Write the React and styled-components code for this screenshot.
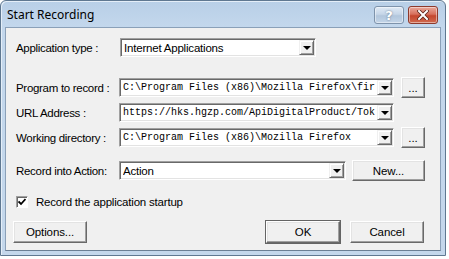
import styled, { createGlobalStyle } from "styled-components"

const Global = createGlobalStyle`
  html, body {
    margin: 0;
    padding: 0;
    background: #ffffff;
  }
  body {
    font-family: "Liberation Sans", Arial, sans-serif;
  }
`

const Window = styled.div`
  width: 446px;
  height: 256px;
  box-sizing: border-box;
  border: 1px solid #5f7891;
  border-radius: 6px 6px 0 0;
  background: linear-gradient(#b8cfe7 0px, #c3d7ec 26px, #c4d7eb 100%);
  display: flex;
  flex-direction: column;
  padding: 0 4px 4px 4px;
  box-shadow: inset 1px 1px 0 #e4eef8;
`

const TitleBar = styled.div`
  height: 26px;
  display: flex;
  align-items: center;
  justify-content: space-between;
  padding: 0 0 0 2px;
`

const Title = styled.span`
  font-family: "Noto Sans", "DejaVu Sans", sans-serif;
  font-size: 12px;
  color: #000;
`

const Caps = styled.div`
  display: flex;
  gap: 4px;
  align-self: flex-start;
  margin-top: 5px;
  margin-right: 3px;
`

const CapButton = styled.div`
  width: ${(p) => p.$w}px;
  height: 18px;
  box-sizing: border-box;
  border: 1px solid ${(p) => (p.$close ? "#8e3a2c" : "#7e93ab")};
  border-radius: 3px;
  background: ${(p) =>
    p.$close
      ? "linear-gradient(#e9a99b 0%, #d7705c 45%, #c4462d 55%, #d06a4f 100%)"
      : "linear-gradient(#e0eaf5 0%, #c6d6e8 45%, #b2c6dc 55%, #c4d5e8 100%)"};
  box-shadow: inset 0 0 0 1px rgba(255, 255, 255, 0.45);
  display: flex;
  align-items: center;
  justify-content: center;
  color: #fff;
  font-size: 13px;
  font-weight: bold;
  font-family: "DejaVu Sans", sans-serif;
  text-shadow: 0 0 2px #5a6f86;
`

const Client = styled.div`
  flex: 1;
  background: #f0f0f0;
  border: 1px solid #8aa0b8;
  border-bottom: 1px solid #6b7f94;
  padding: 9px 0 0 10px;
  display: flex;
  flex-direction: column;
  font-size: 12px;
  color: #000;
`

const Row = styled.div`
  display: flex;
  align-items: center;
  height: 21px;
  margin-top: ${(p) => p.$mt || 0}px;
`

const Label = styled.div`
  width: 103px;
  flex: none;
  font-size: 11.5px;
  letter-spacing: -0.3px;
  white-space: nowrap;
`

const Combo = styled.div`
  width: ${(p) => p.$w}px;
  height: 19px;
  box-sizing: border-box;
  margin-left: ${(p) => p.$ml || 0}px;
  background: #fff;
  border-top: 1px solid #a0a0a0;
  border-left: 1px solid #a0a0a0;
  border-right: 1px solid #fff;
  border-bottom: 1px solid #fff;
  box-shadow: inset 1px 1px 0 #696969, inset -1px -1px 0 #e3e3e3;
  display: flex;
  align-items: center;
  padding: 0 1px 0 3px;
  overflow: hidden;
`

const ComboText = styled.div`
  flex: 1;
  min-width: 0;
  overflow: hidden;
  white-space: nowrap;
  font-family: ${(p) =>
    p.$mono ? '"Liberation Mono", "DejaVu Sans Mono", monospace' : '"Liberation Sans", Arial, sans-serif'};
  font-size: ${(p) => (p.$mono ? "10px" : "11.5px")};
  letter-spacing: ${(p) => (p.$mono ? "0" : "-0.2px")};
`

const Arrow = styled.div`
  width: 15px;
  height: 15px;
  flex: none;
  box-sizing: border-box;
  background: #f0f0f0;
  border-top: 1px solid #f0f0f0;
  border-left: 1px solid #f0f0f0;
  border-right: 1px solid #696969;
  border-bottom: 1px solid #696969;
  box-shadow: inset 1px 1px 0 #fff, inset -1px -1px 0 #a0a0a0;
  display: flex;
  align-items: center;
  justify-content: center;

  &::after {
    content: "";
    border-left: 4px solid transparent;
    border-right: 4px solid transparent;
    border-top: 4px solid #000;
    margin-top: 1px;
  }
`

const Button = styled.div`
  width: ${(p) => p.$w}px;
  height: ${(p) => p.$h || 22}px;
  box-sizing: border-box;
  margin-left: ${(p) => p.$ml || 0}px;
  margin-right: ${(p) => p.$mr || 0}px;
  background: #f0f0f0;
  border-top: 1px solid #fff;
  border-left: 1px solid #fff;
  border-right: 1px solid #696969;
  border-bottom: 1px solid #696969;
  box-shadow: inset -1px -1px 0 #a0a0a0, inset 1px 1px 0 #e3e3e3;
  outline: ${(p) => (p.$default ? "1px solid #646464" : "none")};
  outline-offset: 0;
  display: flex;
  align-items: center;
  justify-content: center;
  font-size: 11.5px;
  letter-spacing: -0.1px;
  flex: none;
`

const CheckRow = styled.div`
  display: flex;
  align-items: center;
  gap: 8px;
  height: 13px;
  margin-top: 14px;
  margin-left: 0;
  font-size: 11.5px;
  letter-spacing: -0.2px;
`

const Box = styled.div`
  width: 12px;
  height: 12px;
  box-sizing: border-box;
  background: #fff;
  border-top: 1px solid #a0a0a0;
  border-left: 1px solid #a0a0a0;
  border-right: 1px solid #fff;
  border-bottom: 1px solid #fff;
  box-shadow: inset 1px 1px 0 #696969;
  display: flex;
  align-items: center;
  justify-content: center;
`

const Footer = styled.div`
  display: flex;
  align-items: center;
  margin-top: 13px;
  margin-left: -3px;
`

const Spacer = styled.div`
  flex: 1;
`

const App = () => {
  return (
    <>
      <Global />
      <Window>
        <TitleBar>
          <Title>Start Recording</Title>
          <Caps>
            <CapButton $w={30}>?</CapButton>
            <CapButton $w={30} $close>
              <svg width="12" height="10" viewBox="0 0 12 10">
                <path
                  d="M2 1 L10 9 M10 1 L2 9"
                  stroke="#5c2419"
                  strokeWidth="3.6"
                  strokeLinecap="square"
                />
                <path
                  d="M2 1 L10 9 M10 1 L2 9"
                  stroke="#fff"
                  strokeWidth="2"
                  strokeLinecap="square"
                />
              </svg>
            </CapButton>
          </Caps>
        </TitleBar>
        <Client>
          <Row>
            <Label>Application type :</Label>
            <Combo $w={196} $ml={1}>
              <ComboText>Internet Applications</ComboText>
              <Arrow />
            </Combo>
          </Row>
          <Row $mt={19}>
            <Label>Program to record :</Label>
            <Combo $w={275}>
              <ComboText $mono>C:\Program Files (x86)\Mozilla Firefox\fir</ComboText>
              <Arrow />
            </Combo>
            <Button $w={24} $h={21} $ml={7}>...</Button>
          </Row>
          <Row $mt={4}>
            <Label>URL Address :</Label>
            <Combo $w={275}>
              <ComboText $mono>https://hks.hgzp.com/ApiDigitalProduct/Tok</ComboText>
              <Arrow />
            </Combo>
          </Row>
          <Row $mt={4}>
            <Label>Working directory :</Label>
            <Combo $w={275}>
              <ComboText $mono>C:\Program Files (x86)\Mozilla Firefox</ComboText>
              <Arrow />
            </Combo>
            <Button $w={24} $h={21} $ml={7}>...</Button>
          </Row>
          <Row $mt={12}>
            <Label>Record into Action:</Label>
            <Combo $w={227}>
              <ComboText>Action</ComboText>
              <Arrow />
            </Combo>
            <Button $w={73} $h={21} $ml={6}>New...</Button>
          </Row>
          <CheckRow>
            <Box>
              <svg width="8" height="8" viewBox="0 0 8 8">
                <path d="M0.5 3.5 L3 6 L7.5 1" stroke="#000" strokeWidth="1.8" fill="none" />
              </svg>
            </Box>
            <span>Record the application startup</span>
          </CheckRow>
          <Footer>
            <Button $w={74}>Options...</Button>
            <Spacer />
            <Button $w={74} $default>OK</Button>
            <Button $w={74} $ml={10} $mr={16}>Cancel</Button>
          </Footer>
        </Client>
      </Window>
    </>
  )
}

export default App
